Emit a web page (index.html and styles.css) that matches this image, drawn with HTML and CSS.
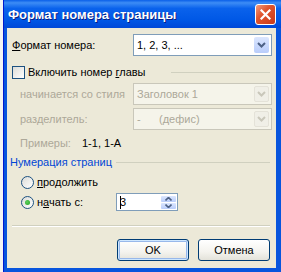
FILE: index.html
```html
<!DOCTYPE html>
<html>
<head>
    <link rel="stylesheet" href="styles.css">
</head>
<body>
    <div class="window">
        <div class="titlebar">
            <span class="title">Формат номера страницы</span>
            <span class="close">
                <svg width="11" height="11" viewBox="0 0 11 11">
                    <path d="M1.5 1.5 L9.5 9.5 M9.5 1.5 L1.5 9.5" stroke="#fff" stroke-width="2.2" stroke-linecap="square"/>
                </svg>
            </span>
        </div>
        <div class="client">
            <!-- Формат номера -->
            <div class="field first">
                <span class="label"><u>Ф</u>ормат номера:</span>
                <div class="combo">
                    <span class="combo-text">1, 2, 3, ...</span>
                    <span class="drop">
                        <svg width="9" height="6" viewBox="0 0 9 6"><path d="M1 1 L4.5 4.5 L8 1" fill="none" stroke="#4d6185" stroke-width="2"/></svg>
                    </span>
                </div>
            </div>

            <!-- Номер главы -->
            <div class="group-head check-head">
                <span class="checkbox"></span>
                <span class="head-text">Включить номер <u>г</u>лавы</span>
                <span class="rule"></span>
            </div>
            <div class="field indent disabled">
                <span class="label">начинается со стиля</span>
                <div class="combo">
                    <span class="combo-text">Заголовок 1</span>
                    <span class="drop">
                        <svg width="9" height="6" viewBox="0 0 9 6"><path d="M1 1 L4.5 4.5 L8 1" fill="none" stroke="#c9c7ba" stroke-width="2"/></svg>
                    </span>
                </div>
            </div>
            <div class="field indent disabled second">
                <span class="label">разделитель:</span>
                <div class="combo">
                    <span class="combo-text">-&nbsp;&nbsp;&nbsp;&nbsp;&nbsp;&nbsp;(дефис)</span>
                    <span class="drop">
                        <svg width="9" height="6" viewBox="0 0 9 6"><path d="M1 1 L4.5 4.5 L8 1" fill="none" stroke="#c9c7ba" stroke-width="2"/></svg>
                    </span>
                </div>
            </div>
            <div class="examples">
                <span class="ex-label">Примеры:</span>
                <span>1-1, 1-A</span>
            </div>

            <!-- Нумерация страниц -->
            <div class="group-head numbering">
                <span class="head-text">Нумерация страниц</span>
                <span class="rule"></span>
            </div>
            <div class="radio-row continue">
                <span class="radio"></span>
                <span><u>п</u>родолжить</span>
            </div>
            <div class="radio-row start">
                <span class="radio checked"></span>
                <span class="start-label">н<u>а</u>чать с:</span>
                <div class="spinner">
                    <span class="spin-text"><span class="caret"></span>3</span>
                    <span class="spin-buttons">
                        <span class="spin-btn">
                            <svg width="7" height="4" viewBox="0 0 7 4"><path d="M0.5 3.5 L3.5 0.5 L6.5 3.5" fill="none" stroke="#4d6185" stroke-width="1.6"/></svg>
                        </span>
                        <span class="spin-btn">
                            <svg width="7" height="4" viewBox="0 0 7 4"><path d="M0.5 0.5 L3.5 3.5 L6.5 0.5" fill="none" stroke="#4d6185" stroke-width="1.6"/></svg>
                        </span>
                    </span>
                </div>
            </div>

            <div class="separator"></div>

            <div class="buttons">
                <button class="btn default">OK</button>
                <button class="btn">Отмена</button>
            </div>
        </div>
    </div>
</body>
</html>
```

FILE: styles.css
```css
/* Диалог в стиле Windows XP */
body {
    margin: 0;
    background-color: #f4f4f4;
    font-family: "Liberation Sans", Arial, sans-serif;
    font-size: 11px;
    color: #000;
}
.window {
    margin-left: 3px;
    height: 272px;
    display: flex;
    flex-direction: column;
    background: #0855dd;
    border-left: 1px solid #0019cf;
}
.titlebar {
    height: 28px;
    flex: none;
    display: flex;
    align-items: center;
    justify-content: space-between;
    padding: 0 5px 0 4px;
    background: linear-gradient(#0a5fe8, #3d8cf5 10%, #0a62ec 30%, #0058e6 70%, #0048d8);
}
.title {
    color: #fff;
    font-weight: bold;
    font-size: 13px;
    text-shadow: 1px 1px 0 #0a1e82;
}
.close {
    width: 19px;
    height: 19px;
    border: 1px solid #fff;
    border-radius: 3px;
    background: linear-gradient(135deg, #f09c80, #e0552e 40%, #c8391a);
    display: flex;
    align-items: center;
    justify-content: center;
}
.client {
    flex: 1;
    margin: 0 5px 4px 3px;
    background-color: #ece9d8;
    padding: 0 4px 0 5px;
    display: flex;
    flex-direction: column;
}
.field {
    display: grid;
    grid-template-columns: 121px 139px;
    align-items: center;
    height: 22px;
}
.field.first {
    margin-top: 6px;
}
.field.indent {
    margin-top: 3px;
}
.field.indent .label {
    padding-left: 8px;
}
.combo {
    height: 20px;
    border: 1px solid #7f9db9;
    background: #fff;
    display: flex;
    align-items: center;
    justify-content: space-between;
    padding-left: 3px;
}
.drop {
    width: 15px;
    height: 16px;
    margin-right: 2px;
    background: linear-gradient(#dbe6fe, #b9cdfb);
    border-radius: 2px;
    display: flex;
    align-items: center;
    justify-content: center;
}
.disabled {
    color: #aca899;
}
.disabled .combo {
    border-color: #c9c7ba;
    background: #f5f4ea;
}
.disabled .drop {
    background: #f0efe7;
    border: 1px solid #e4e2d8;
    width: 13px;
    height: 14px;
}
.group-head {
    display: flex;
    align-items: center;
    height: 16px;
}
.check-head {
    margin-top: 8px;
}
.checkbox {
    width: 11px;
    height: 11px;
    border: 1px solid #1c5180;
    background: linear-gradient(135deg, #dcdcd7, #fff);
    margin-right: 3px;
    flex: none;
}
.check-head .head-text {
    width: 143px;
}
.rule {
    flex: 1;
    height: 1px;
    background: #d0d0bf;
    margin-right: 2px;
}
.examples {
    margin-top: 5px;
    height: 16px;
    display: flex;
    align-items: center;
    padding-left: 8px;
}
.ex-label {
    width: 62px;
    color: #aca899;
}
.numbering {
    margin-top: 3px;
    margin-left: -2px;
}
.numbering .head-text {
    color: #0046d5;
    margin-right: 4px;
}
.radio-row {
    display: flex;
    align-items: center;
    padding-left: 9px;
}
.radio-row.continue {
    margin-top: 4px;
    height: 16px;
}
.radio-row.start {
    margin-top: 3px;
    height: 18px;
}
.radio {
    width: 11px;
    height: 11px;
    border: 1px solid #1c5180;
    border-radius: 50%;
    background: linear-gradient(135deg, #dcdcd7, #fff);
    margin-right: 3px;
    flex: none;
    display: flex;
    align-items: center;
    justify-content: center;
}
.radio.checked::after {
    content: "";
    width: 5px;
    height: 5px;
    border-radius: 50%;
    background: radial-gradient(circle at 40% 40%, #5ed05e, #21a121);
}
.start-label {
    width: 79px;
}
.spinner {
    width: 60px;
    height: 16px;
    border: 1px solid #7f9db9;
    background: #fff;
    display: flex;
    align-items: center;
    justify-content: space-between;
}
.spin-text {
    display: flex;
    align-items: center;
    padding-left: 3px;
}
.caret {
    width: 1px;
    height: 13px;
    background: #000;
    margin-right: -1px;
}
.spin-buttons {
    display: flex;
    flex-direction: column;
    gap: 1px;
    margin-right: 1px;
}
.spin-btn {
    width: 15px;
    height: 6px;
    background: linear-gradient(#dbe6fe, #b9cdfb);
    border-radius: 1px;
    display: flex;
    align-items: center;
    justify-content: center;
}
.separator {
    margin-top: 14px;
    height: 1px;
    background: #d0d0bf;
    border-bottom: 1px solid #fff;
    margin-right: 2px;
}
.buttons {
    margin-top: 12px;
    display: flex;
    justify-content: flex-end;
    gap: 9px;
    margin-right: 2px;
}
.btn {
    width: 72px;
    height: 22px;
    border: 1px solid #003c74;
    border-radius: 3px;
    background: linear-gradient(#fff, #f4f3ee 60%, #e3e2da);
    font-family: inherit;
    font-size: 11px;
    color: #000;
    padding: 0;
}
.btn.default {
    box-shadow: inset 0 0 0 1px #cee7ff, inset 0 0 0 2px #98b8ea;
}
```
